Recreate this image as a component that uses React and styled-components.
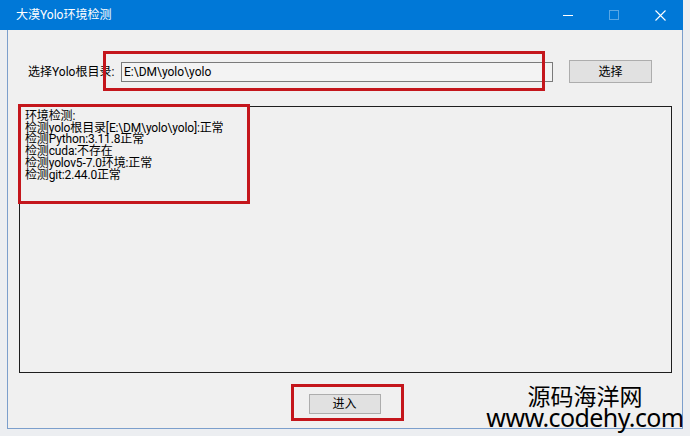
import React from "react";
import styled, { createGlobalStyle } from "styled-components";

const GlobalStyle = createGlobalStyle`
	body {
		margin: 0;
		background: #eceef1;
		font-family: Roboto, "Noto Sans CJK SC", sans-serif;
	}
	* {
		box-sizing: border-box;
	}
`;

const Desktop = styled.div`
	position: relative;
	width: 690px;
	height: 436px;
	overflow: hidden;
	background: #eceef1;
`;

const Window = styled.div`
	width: 683px;
	display: flex;
	flex-direction: column;
`;

const TitleBar = styled.div`
	height: 30px;
	background: #0078d7;
	display: flex;
	align-items: center;
	padding-left: 16px;
	color: #ffffff;
	font-size: 12px;
	line-height: 30px;
`;

const Controls = styled.div`
	margin-left: auto;
	display: flex;
	height: 100%;
`;

const ControlButton = styled.div`
	width: 46px;
	height: 30px;
	display: flex;
	align-items: center;
	justify-content: center;
	opacity: ${(p) => (p.disabled ? 0.35 : 1)};
`;

const Body = styled.div`
	margin-left: 7px;
	height: 399px;
	background: #f0f0f0;
	border: 1px solid #7c9fcc;
	border-top: none;
	padding-left: 11px;
	display: flex;
	flex-direction: column;
	font-size: 12px;
	color: #000;
`;

const PathRow = styled.div`
	margin-top: 30px;
	padding-left: 9px;
	height: 23px;
	display: flex;
	align-items: center;
`;

const Label = styled.span`
	width: 93px;
	line-height: 14px;
`;

const PathInput = styled.div`
	width: 432px;
	height: 20px;
	border: 1px solid #7a7a7a;
	background: #f3f3f3;
	padding-left: 2px;
	display: flex;
	align-items: center;
	line-height: 14px;
`;

const WinButton = styled.div`
	width: ${(p) => p.w}px;
	height: ${(p) => p.h}px;
	margin-left: ${(p) => p.ml || 0}px;
	background: #e1e1e1;
	border: 1px solid #adadad;
	display: flex;
	align-items: center;
	justify-content: center;
	line-height: 14px;
`;

const LogBox = styled.div`
	margin-top: 23px;
	width: 653px;
	height: 267px;
	border: 1px solid #1e1e1e;
	background: #f0f0f0;
	padding: 4px 5px;
	line-height: 11.7px;
	letter-spacing: -0.15px;
	white-space: pre;
`;

const Footer = styled.div`
	margin-top: 21px;
	padding-right: 12px;
	display: flex;
	justify-content: center;
`;

const Mark = styled.div`
	position: absolute;
	left: ${(p) => p.x}px;
	top: ${(p) => p.y}px;
	width: ${(p) => p.w}px;
	height: ${(p) => p.h}px;
	border: 3px solid #c4161c;
`;

const Watermark = styled.div`
	position: absolute;
	left: 480px;
	top: 384px;
	width: 210px;
	text-align: center;
	color: #000;
	.name {
		font-family: "Noto Sans CJK SC", sans-serif;
		font-size: 23px;
		line-height: 22px;
	}
	.url {
		font-family: "Noto Sans", sans-serif;
		font-size: 25px;
		line-height: 22px;
		letter-spacing: -0.6px;
	}
`;

const logLines = [
	"环境检测:",
	"检测yolo根目录[E:\\DM\\yolo\\yolo]:正常",
	"检测Python:3.11.8正常",
	"检测cuda:不存在",
	"检测yolov5-7.0环境:正常",
	"检测git:2.44.0正常",
];

export default function App() {
	return (
		<Desktop>
			<GlobalStyle />
			<Window>
				<TitleBar>
					大漠Yolo环境检测
					<Controls>
						<ControlButton>
							<svg width="10" height="10" viewBox="0 0 10 10">
								<line x1="0" y1="5.5" x2="10" y2="5.5" stroke="#fff" strokeWidth="1" />
							</svg>
						</ControlButton>
						<ControlButton disabled>
							<svg width="10" height="10" viewBox="0 0 10 10">
								<rect x="0.5" y="0.5" width="9" height="9" fill="none" stroke="#fff" strokeWidth="1" />
							</svg>
						</ControlButton>
						<ControlButton>
							<svg width="11" height="11" viewBox="0 0 11 11">
								<path d="M0.5 0.5 L10.5 10.5 M10.5 0.5 L0.5 10.5" stroke="#fff" strokeWidth="1.1" />
							</svg>
						</ControlButton>
					</Controls>
				</TitleBar>
				<Body>
					<PathRow>
						<Label>选择Yolo根目录:</Label>
						<PathInput>E:\DM\yolo\yolo</PathInput>
						<WinButton w={83} h={23} ml={16}>
							选择
						</WinButton>
					</PathRow>
					<LogBox>{logLines.join("\n")}</LogBox>
					<Footer>
						<WinButton w={72} h={20}>
							进入
						</WinButton>
					</Footer>
				</Body>
			</Window>
			<Mark x={103} y={51} w={442} h={40} />
			<Mark x={18} y={104} w={232} h={100} />
			<Mark x={291} y={384} w={113} h={37} />
			<Watermark>
				<div className="name">源码海洋网</div>
				<div className="url">www.codehy.com</div>
			</Watermark>
		</Desktop>
	);
}
